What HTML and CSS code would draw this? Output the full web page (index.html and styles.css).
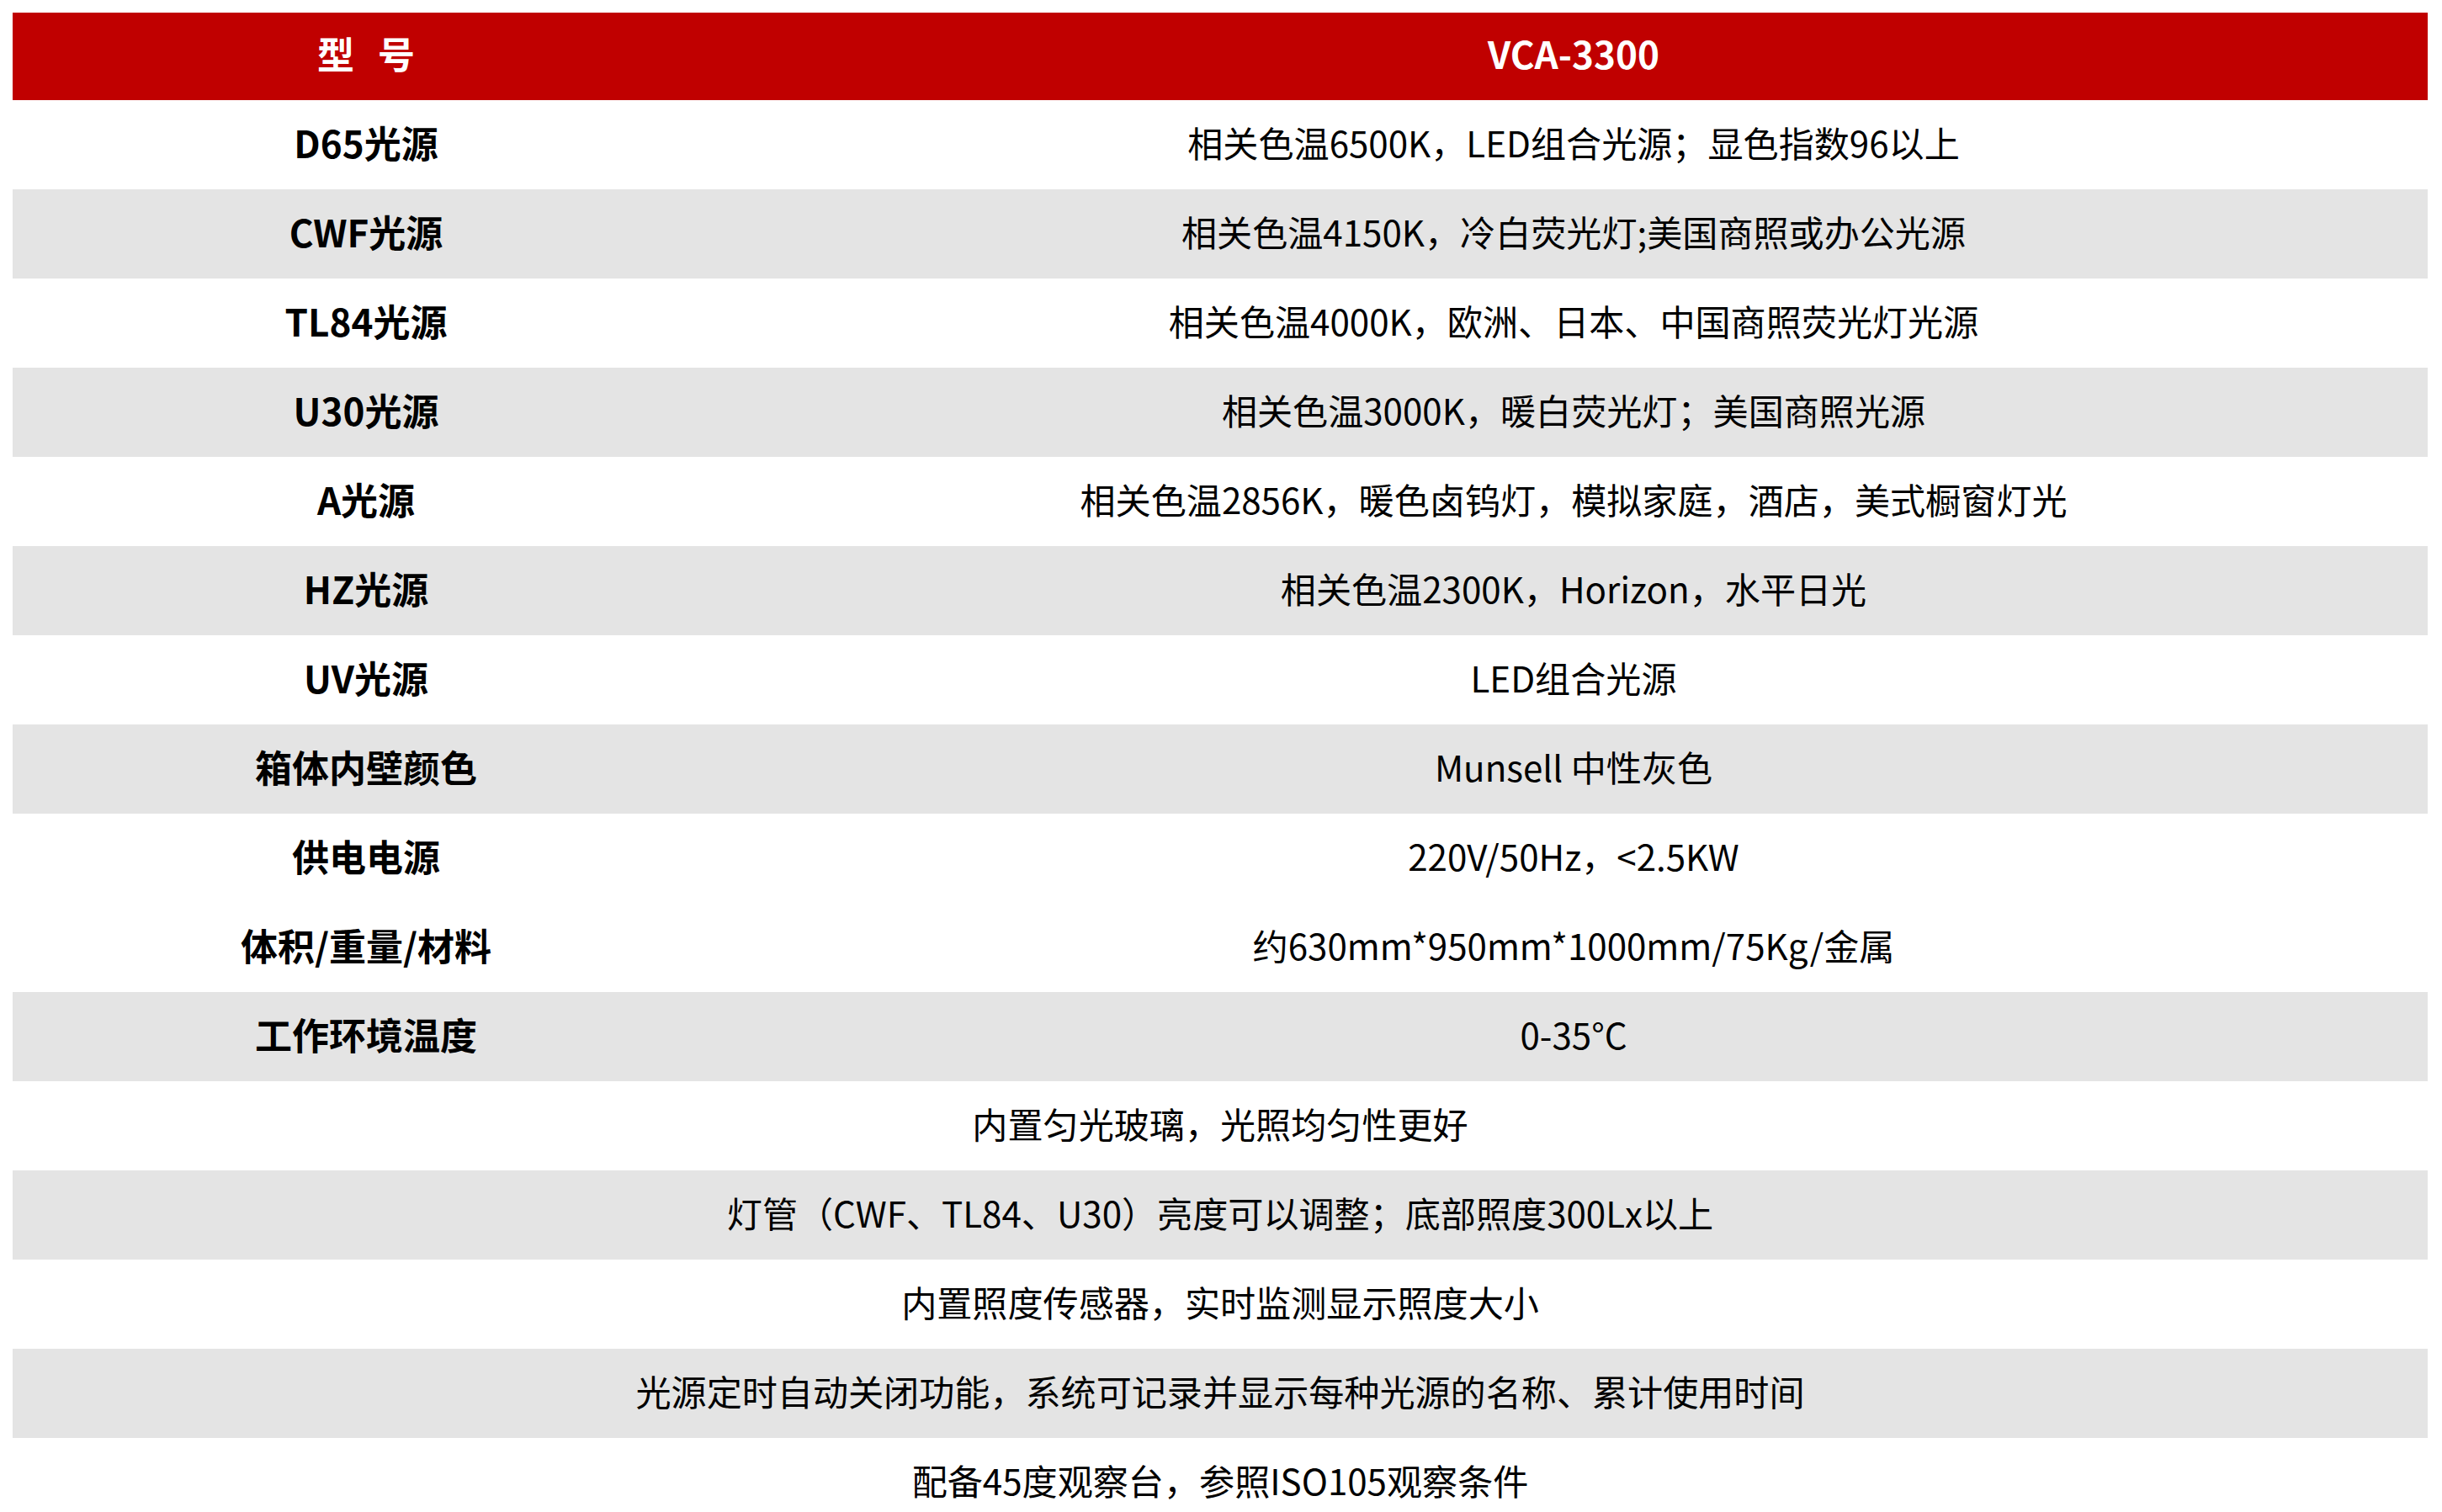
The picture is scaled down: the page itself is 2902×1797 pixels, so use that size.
FILE: index.html
```html
<!DOCTYPE html>
<html lang="zh-CN">
<head>
<meta charset="utf-8">
<title>VCA-3300 参数</title>
<link rel="stylesheet" href="styles.css">
</head>
<body>
<table class="spec">
  <colgroup>
    <col class="col-label">
    <col class="col-value">
  </colgroup>
  <thead>
    <tr class="head-row">
      <th class="head-label">型 号</th>
      <th class="head-value">VCA-3300</th>
    </tr>
  </thead>
  <tbody>
    <tr><td class="label">D65光源</td><td class="value">相关色温6500K，LED组合光源；显色指数96以上</td></tr>
    <tr class="alt"><td class="label">CWF光源</td><td class="value">相关色温4150K，冷白荧光灯;美国商照或办公光源</td></tr>
    <tr><td class="label">TL84光源</td><td class="value">相关色温4000K，欧洲、日本、中国商照荧光灯光源</td></tr>
    <tr class="alt"><td class="label">U30光源</td><td class="value">相关色温3000K，暖白荧光灯；美国商照光源</td></tr>
    <tr><td class="label">A光源</td><td class="value">相关色温2856K，暖色卤钨灯，模拟家庭，酒店，美式橱窗灯光</td></tr>
    <tr class="alt"><td class="label">HZ光源</td><td class="value">相关色温2300K，Horizon，水平日光</td></tr>
    <tr><td class="label">UV光源</td><td class="value">LED组合光源</td></tr>
    <tr class="alt"><td class="label">箱体内壁颜色</td><td class="value">Munsell 中性灰色</td></tr>
    <tr><td class="label">供电电源</td><td class="value">220V/50Hz，&lt;2.5KW</td></tr>
    <tr><td class="label">体积/重量/材料</td><td class="value">约630mm*950mm*1000mm/75Kg/金属</td></tr>
    <tr class="alt"><td class="label">工作环境温度</td><td class="value">0-35°C</td></tr>
    <tr><td class="value" colspan="2">内置匀光玻璃，光照均匀性更好</td></tr>
    <tr class="alt"><td class="value" colspan="2">灯管（CWF、TL84、U30）亮度可以调整；底部照度300Lx以上</td></tr>
    <tr><td class="value" colspan="2">内置照度传感器，实时监测显示照度大小</td></tr>
    <tr class="alt"><td class="value" colspan="2">光源定时自动关闭功能，系统可记录并显示每种光源的名称、累计使用时间</td></tr>
    <tr><td class="value" colspan="2">配备45度观察台，参照ISO105观察条件</td></tr>
  </tbody>
</table>
</body>
</html>
```

FILE: styles.css
```css
html {
  overflow: hidden;
  background: #ffffff;
}

body {
  margin: 0;
  padding: 15px 17px 15px 15px;
  font-family: "Noto Sans CJK SC", "Noto Sans", sans-serif;
  color: #000000;
  background: #ffffff;
}

.spec {
  width: 2870px;
  border-collapse: collapse;
  border-spacing: 0;
  table-layout: fixed;
}

.col-label {
  width: 840px;
}

.col-value {
  width: 2030px;
}

.head-row {
  height: 104px;
  background: #c00000;
}

.head-row th {
  padding: 0 0 8px 0;
  color: #ffffff;
  font-weight: 700;
  font-size: 44px;
  line-height: 1.2;
  text-align: center;
  vertical-align: middle;
}

.head-label {
  word-spacing: 18px;
}

.spec tbody tr {
  height: 106px;
  background: #ffffff;
}

.spec tbody tr.alt {
  background: #e4e4e4;
}

.spec td {
  padding: 0 0 6px 0;
  text-align: center;
  vertical-align: middle;
  font-size: 42.1px;
  line-height: 1.2;
}

.spec td.label {
  font-weight: 700;
  font-size: 44px;
}

.value {
  font-weight: 400;
}
```
